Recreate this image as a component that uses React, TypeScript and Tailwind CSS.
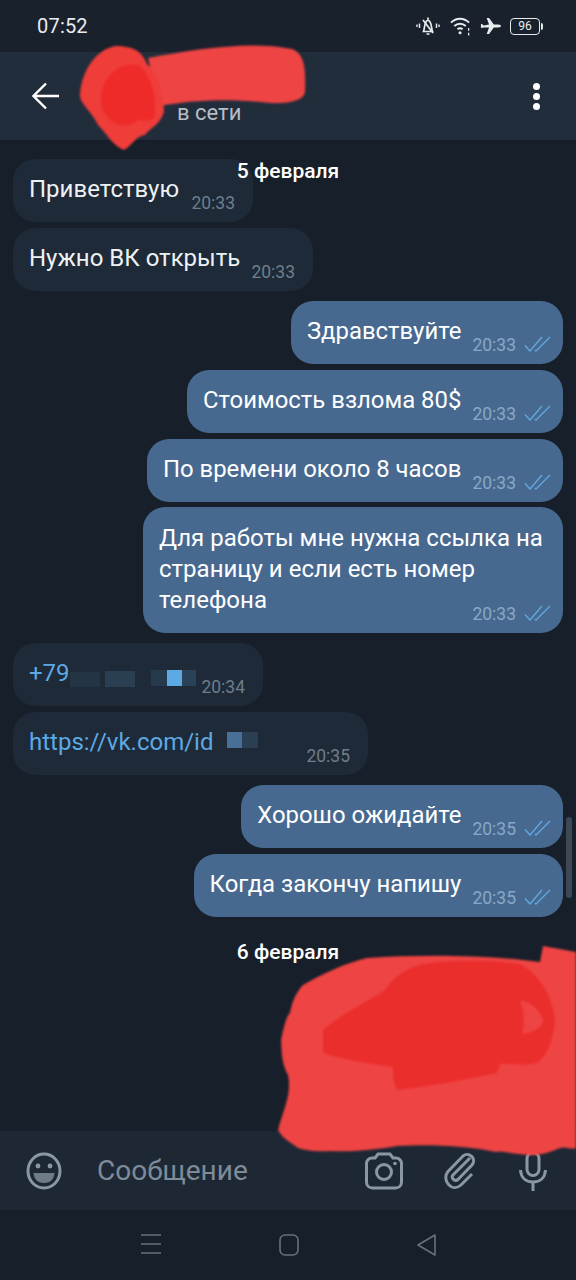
const font = { fontFamily: 'Roboto, "Noto Sans", sans-serif' }

function Checks() {
  return (
    <svg width="27" height="16" viewBox="0 0 27 16" fill="none" stroke="#5fa8e0" strokeWidth="1.4" className="ml-2 mb-[4px]">
      <path d="M1 9.5 L6 15 L18 1" />
      <path d="M11 14 L12 15 L26 1" />
    </svg>
  )
}

function Outgoing({ text, time }: { text: string; time: string }) {
  return (
    <div className="self-end flex items-end h-[63px] rounded-[22px] bg-[#48698f] pl-4 pr-3 pt-[14px] pb-[8px]">
      <span className="text-[23.9px] leading-[32px] self-start text-white">{text}</span>
      <span className="ml-[11px] text-[17.5px] leading-[22px] text-[#86a8ca]">{time}</span>
      <Checks />
    </div>
  )
}

function Incoming({ width, time, children }: { width: string; time: string; children: React.ReactNode }) {
  return (
    <div className={`relative flex h-[63px] rounded-[22px] bg-[#1e2a37] pl-4 pt-[14px] ${width}`}>
      <span className="text-[24px] leading-[32px] text-[#eef1f4]">{children}</span>
      <span className="absolute right-[18px] bottom-[8px] text-[17.5px] leading-[22px] text-[#6f7d8b]">{time}</span>
    </div>
  )
}

function Pixel({ className }: { className: string }) {
  return <span className={`absolute ${className}`} />
}

export default function App() {
  return (
    <div style={font} className="relative w-[576px] h-[1280px] overflow-hidden bg-[#161f2a] flex flex-col">
      {/* status bar */}
      <div className="h-[52px] shrink-0 flex items-center justify-between pl-[37px] pr-[36px] bg-[#18212c]">
        <span className="text-[20px] text-[#e9ecef] tracking-[0.2px]">07:52</span>
        <div className="flex items-center text-[#e9ecef]">
          <svg width="24" height="22" viewBox="0 0 24 22" fill="none" stroke="currentColor" strokeWidth="1.7">
            <path d="M7.5 16.5 C9 13 8 6.5 12 5 C16 6.5 15 13 16.5 16.5 Z" />
            <path d="M7 5 L17 18" />
            <path d="M12 2.5 V4.5 M10.5 19 H13.5" />
            <path d="M3.5 8.5 V13 M1 9.5 V12 M20.5 8.5 V13 M23 9.5 V12" strokeWidth="1.4" />
          </svg>
          <svg className="ml-[10px]" width="22" height="20" viewBox="0 0 23 20" fill="none" stroke="currentColor" strokeWidth="2">
            <path d="M1 6.5 C6.5 1 14.5 1 20 6.5" />
            <path d="M4.5 10 C8 6.8 13 6.8 16.5 10" />
            <path d="M7.8 13.3 C9.5 12 11.5 12 13.2 13.3" />
            <circle cx="10.5" cy="17" r="1.6" fill="currentColor" stroke="none" />
            <path d="M19.5 12 V15 M19.5 17 V20" strokeWidth="1.3" />
          </svg>
          <svg className="ml-2" width="21" height="20" viewBox="0 0 22 20" fill="currentColor">
            <path d="M1 8 L2 8 L4 9.500 L9.500 8.500 L7 1.500 L9.500 1.500 L14.500 8.500 L19 8.500 C21 8.500 22 9.500 22 10 C22 10.500 21 11.500 19 11.500 L14.500 11.500 L9.500 18.500 L7 18.500 L9.500 11.500 L4 11.500 L1 12 Z" />
          </svg>
          <div className="ml-[9px] relative w-[30px] h-[17px] rounded-[4px] border border-[#e9ecef] flex items-center justify-center text-[12px] leading-none">
            96
            <span className="absolute -right-[4px] top-[4px] w-[2px] h-[7px] rounded-r-sm bg-[#e9ecef]" />
          </div>
        </div>
      </div>

      {/* chat header */}
      <div className="h-[89px] shrink-0 flex items-center pl-8 pr-9 bg-[#212d3b] border-b border-[#141c26]">
        <svg width="27" height="28" viewBox="0 0 27 28" fill="none" stroke="#fff" strokeWidth="2.4">
          <path d="M27 14 H2 M14 1.5 L1.5 14 L14 26.5" />
        </svg>
        <span className="ml-[118px] mt-[34px] text-[22px] leading-[26px] text-[#b7bec6]">в сети</span>
        <div className="ml-auto flex flex-col gap-[3px]">
          <span className="w-[7px] h-[7px] rounded-full bg-white" />
          <span className="w-[7px] h-[7px] rounded-full bg-white" />
          <span className="w-[7px] h-[7px] rounded-full bg-white" />
        </div>
      </div>

      {/* messages */}
      <div className="relative flex-1 flex flex-col px-[13px] pt-[18px]">
        <Incoming width="w-[240px]" time="20:33">Приветствую</Incoming>
        <div className="mt-[6px]">
          <Incoming width="w-[300px]" time="20:33">Нужно ВК открыть</Incoming>
        </div>

        <div className="mt-[10px] flex flex-col gap-[6px]">
          <Outgoing text="Здравствуйте" time="20:33" />
          <Outgoing text="Стоимость взлома 80$" time="20:33" />
          <Outgoing text="По времени около 8 часов" time="20:33" />
          <div className="self-end w-[420px] h-[126px] -mt-px rounded-[22px] bg-[#48698f] pl-4 pr-3 pt-[16px] flex flex-col">
            <p className="text-[24px] leading-[31px] text-white">Для работы мне нужна ссылка на страницу и если есть номер</p>
            <div className="flex items-start">
              <span className="text-[24px] leading-[31px] text-white">телефона</span>
              <span className="ml-auto mt-[18px] text-[17.5px] leading-[22px] text-[#86a8ca]">20:33</span>
              <span className="mt-[20px]">
                <Checks />
              </span>
            </div>
          </div>
        </div>

        <div className="mt-[10px]">
          <Incoming width="w-[250px]" time="20:34">
            <span className="text-[#5da9e4]">+79</span>
          </Incoming>
        </div>
        <div className="mt-[6px]">
          <Incoming width="w-[355px]" time="20:35">
            <span className="text-[#5da9e4]">https://vk.com/id</span>
          </Incoming>
        </div>

        {/* censored digits */}
        <Pixel className="left-[70px] top-[531px] w-[30px] h-[15px] bg-[#233445]" />
        <Pixel className="left-[105px] top-[530px] w-[30px] h-[16px] bg-[#2b3f53]" />
        <Pixel className="left-[151px] top-[529px] w-[16px] h-[16px] bg-[#263a4e]" />
        <Pixel className="left-[167px] top-[529px] w-[15px] h-[16px] bg-[#5da9e4]" />
        <Pixel className="left-[182px] top-[529px] w-[14px] h-[16px] bg-[#2a4258]" />
        <Pixel className="left-[227px] top-[591px] w-[15px] h-[16px] bg-[#486f95]" />
        <Pixel className="left-[242px] top-[591px] w-[16px] h-[16px] bg-[#2a3f54]" />

        <div className="mt-[10px] flex flex-col gap-[6px]">
          <Outgoing text="Хорошо ожидайте" time="20:35" />
          <Outgoing text="Когда закончу напишу" time="20:35" />
        </div>

        <p className="mt-[23px] text-center text-[21px] leading-[24px] font-medium text-white">6 февраля</p>

        <p className="absolute left-0 right-0 top-[18px] text-center text-[21px] leading-[24px] font-medium text-white">5 февраля</p>
        <span className="absolute right-[4px] top-[676px] w-[6px] h-[81px] rounded-full bg-[#3d4854]" />
      </div>

      {/* input bar */}
      <div className="h-[79px] shrink-0 flex items-center bg-[#1e2835] pl-[26px] pr-[29px] text-[#8a97a4]">
        <svg width="36" height="38" viewBox="0 0 36 38" fill="none" stroke="currentColor" strokeWidth="3">
          <ellipse cx="18" cy="19" rx="16" ry="17" />
          <circle cx="12" cy="14" r="2.4" fill="currentColor" stroke="none" />
          <circle cx="24" cy="14" r="2.4" fill="currentColor" stroke="none" />
          <path d="M7.5 21 H28.5 C28 28 23.5 31 18 31 C12.5 31 8 28 7.5 21 Z" fill="currentColor" fillOpacity="0.75" stroke="none" />
        </svg>
        <span className="ml-[35px] text-[28px] leading-[32px] text-[#7e8b98]">Сообщение</span>
        <div className="ml-auto flex items-center">
          <svg width="38" height="38" viewBox="0 0 38 38" fill="none" stroke="currentColor" strokeWidth="3">
            <path d="M10 6 L13 2 H25 L28 6 H31 C34 6 36.5 8.5 36.5 11.5 V30 C36.5 33.5 34 36 30.500 36 H7.500 C4 36 1.500 33.500 1.500 30 V11.500 C1.500 8.500 4 6 7 6 Z" />
            <circle cx="19" cy="20" r="7.500" />
            <circle cx="30" cy="11.500" r="1.800" fill="currentColor" stroke="none" />
          </svg>
          <svg className="ml-[41px]" width="32" height="38" viewBox="0 0 32 38" fill="none" stroke="currentColor" strokeWidth="3">
            <path d="M26 6 L9 23 C6.500 26 11 30 14 27.500 L28 13 C33 7 25 -1 19 4 L4 19.500 C-3 28 8 41 17 33 L28 22" />
          </svg>
          <svg className="ml-[43px]" width="28" height="40" viewBox="0 0 28 40" fill="none" stroke="currentColor" strokeWidth="3">
            <rect x="8" y="1.500" width="12" height="23" rx="6" />
            <path d="M1.500 19 C2 27 7 31 14 31 C21 31 26 27 26.500 19 M14 31 V40" />
          </svg>
        </div>
      </div>

      {/* nav bar */}
      <div className="h-[70px] shrink-0 flex items-start justify-center gap-[118px] pt-[24px] bg-[#161f2a] text-[#65717d]">
        <svg width="20" height="20" viewBox="0 0 20 20" fill="none" stroke="currentColor" strokeWidth="1.600">
          <path d="M0 1 H20 M0 10 H20 M0 19 H20" />
        </svg>
        <svg width="20" height="22" viewBox="0 0 20 22" fill="none" stroke="currentColor" strokeWidth="1.600">
          <rect x="1" y="1" width="18" height="20" rx="5" />
        </svg>
        <svg width="19" height="22" viewBox="0 0 19 22" fill="none" stroke="currentColor" strokeWidth="1.600" strokeLinejoin="round">
          <path d="M18 1 L1 11 L18 21 Z" />
        </svg>
      </div>

      {/* red scribbles drawn over the names */}
      <svg className="absolute left-0 top-0 pointer-events-none blur-[1px]" width="576" height="1280" viewBox="0 0 576 1280">
        <path d="M148 58 C190 50 250 40 292 49 C304 54 306 66 305 92 C304 100 290 104 270 103 C230 98 190 100 160 106 Z" fill="#ef4444" />
        <path d="M80 94 C82 70 96 50 115 46 C135 46 142 52 147 64 C158 72 164 95 164 112 C160 125 150 128 145 135 C135 136 132 146 124 150 C112 145 108 135 98 125 C92 112 78 102 80 94 Z" fill="#ef3d3a" />
        <path d="M140 66 C152 78 158 100 154 118 C148 122 142 120 138 120 C128 130 112 126 104 112 C96 96 104 78 118 68 C126 64 134 64 140 66 Z" fill="#ee2b28" />
        <path d="M278 1130 C283 1110 292 1095 288 1075 C280 1060 282 1045 281 1040 C284 1025 287 1015 290 1013 C292 1000 298 990 303 985 C320 975 345 963 367 958 C420 954 490 955 540 962 L543 946 L576 952 V1148 C570 1150 565 1146 560 1148 C550 1152 540 1156 529 1155 C510 1154 500 1150 496 1152 C470 1146 430 1144 397 1146 C375 1150 350 1152 330 1151 C315 1152 305 1150 298 1148 C290 1142 282 1138 278 1130 Z" fill="#ef4444" />
        <path d="M323 1030 C340 1015 370 1000 385 990 C395 975 410 965 430 963 C460 960 490 960 520 964 C540 975 552 995 555 1020 C553 1040 548 1055 537 1063 C525 1066 510 1064 500 1064 L497 1073 C465 1080 430 1086 397 1090 C392 1080 393 1072 393 1067 C370 1064 345 1060 323 1053 Z" fill="#ea2e2c" />
        <path d="M520 1000 C535 1003 543 1015 543 1022 C540 1030 530 1033 522 1034 C525 1022 524 1010 520 1000 Z" fill="#ef4444" />
      </svg>
    </div>
  )
}
